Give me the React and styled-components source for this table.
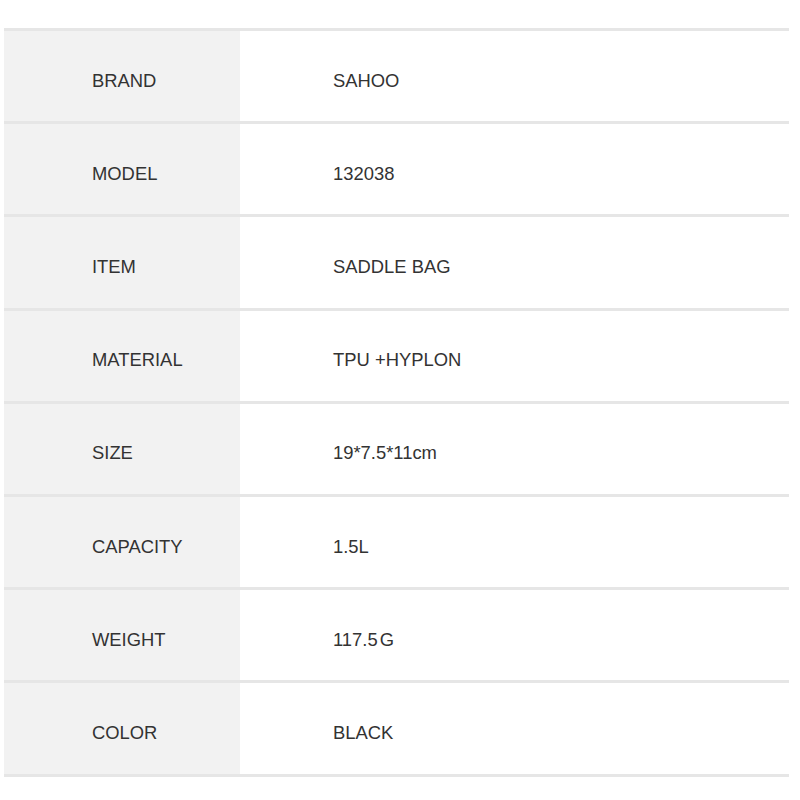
import React from 'react';
import styled, { createGlobalStyle } from 'styled-components';

const GlobalStyle = createGlobalStyle`
  body {
    margin: 0;
    background: #ffffff;
    font-family: "Liberation Sans", Arial, sans-serif;
  }
`;

const Page = styled.div`
  width: 800px;
  height: 800px;
  padding: 28px 11px 0 4px;
  box-sizing: border-box;
`;

const SpecTable = styled.div`
  display: flex;
  flex-direction: column;
  border-bottom: 3px solid #e6e6e6;
`;

const Row = styled.div`
  display: grid;
  grid-template-columns: 236px 1fr;
  height: 93.2px;
  border-top: 3px solid #e6e6e6;
  box-sizing: border-box;
`;

const Label = styled.div`
  display: flex;
  align-items: center;
  padding: 9px 0 0 88px;
  background: #f2f2f2;
  color: #333333;
  font-size: 18.4px;
`;

const Value = styled.div`
  display: flex;
  align-items: center;
  padding: 9px 0 0 93px;
  color: #333333;
  font-size: 18.4px;
`;

const Unit = styled.span`
  margin-left: 2px;
`;

const specs = [
  { label: 'BRAND', value: 'SAHOO' },
  { label: 'MODEL', value: '132038' },
  { label: 'ITEM', value: 'SADDLE BAG' },
  { label: 'MATERIAL', value: 'TPU +HYPLON' },
  { label: 'SIZE', value: '19*7.5*11cm' },
  { label: 'CAPACITY', value: '1.5L' },
  { label: 'WEIGHT', value: '117.5', unit: 'G' },
  { label: 'COLOR', value: 'BLACK' },
];

const App = () => {
  return (
    <>
      <GlobalStyle />
      <Page>
        <SpecTable>
          {specs.map((s) => (
            <Row key={s.label}>
              <Label>{s.label}</Label>
              <Value>
                {s.value}
                {s.unit && <Unit>{s.unit}</Unit>}
              </Value>
            </Row>
          ))}
        </SpecTable>
      </Page>
    </>
  );
};

export default App;
